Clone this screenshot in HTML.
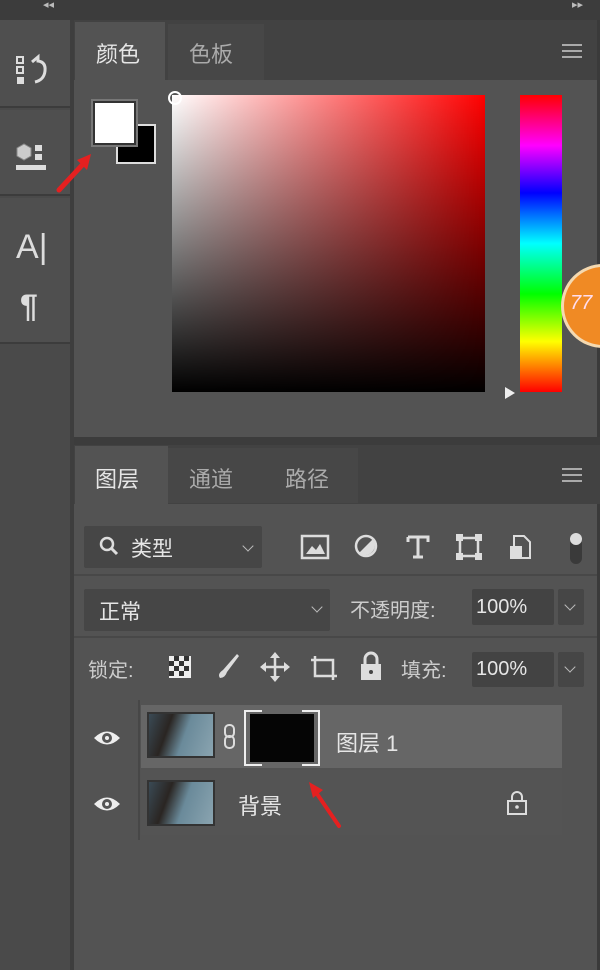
<!DOCTYPE html>
<html><head><meta charset="utf-8"><style>
*{margin:0;padding:0;box-sizing:border-box}
body{width:600px;height:970px;background:#535353;position:relative;overflow:hidden;font-family:"Liberation Sans","Noto Sans CJK SC",sans-serif;color:#ddd}
.a{position:absolute}
.box{position:absolute;background:#464646;border-radius:2px}
.t{position:absolute;font-size:21px;color:#e6e6e6;white-space:nowrap}
.chev{position:absolute;width:8px;height:8px;border-right:1.5px solid #bbb;border-bottom:1.5px solid #bbb;transform:rotate(45deg)}
.ham{position:absolute;width:20px;height:14px;border-top:2px solid #aaa;border-bottom:2px solid #aaa}
.ham:after{content:"";position:absolute;left:0;right:0;top:4px;height:2px;background:#aaa}
</style></head><body>
<div class="a" style="left:0;top:0;width:600px;height:20px;background:#3c3c3c"></div>
<div class="t" style="left:43px;top:-2px;font-size:11px;color:#bbb">◂◂</div>
<div class="t" style="left:572px;top:-2px;font-size:11px;color:#bbb">▸▸</div>
<div class="a" style="left:0;top:20px;width:72px;height:950px;background:#4a4a4a"></div>
<div class="a" style="left:0;top:20px;width:70px;height:88px;background:#4f4f4f;border-bottom:2px solid #3c3c3c"></div>
<div class="a" style="left:0;top:110px;width:70px;height:86px;background:#4f4f4f;border-bottom:2px solid #3c3c3c"></div>
<div class="a" style="left:0;top:198px;width:70px;height:146px;background:#4f4f4f;border-bottom:2px solid #3c3c3c"></div>
<div class="a" style="left:70px;top:20px;width:4px;height:950px;background:#3e3e3e"></div>
<svg class="a" style="left:14px;top:52px" width="36" height="40"><g fill="none" stroke="#ddd" stroke-width="2"><rect x="3" y="5" width="6" height="6"/><rect x="3" y="15" width="6" height="6"/></g><rect x="3" y="25" width="7" height="7" fill="#ddd"/><path d="M18 10 L24 5 L24 9 Q32 10 31 19 Q30 28 21 30" stroke="#ddd" stroke-width="3" fill="none"/></svg>
<svg class="a" style="left:14px;top:140px" width="36" height="40"><path d="M3 8 L10 4 L17 8 L17 16 L10 20 L3 16Z" fill="#ccc" stroke="#888"/><rect x="21" y="5" width="7" height="6" fill="#ddd"/><rect x="21" y="14" width="7" height="6" fill="#ddd"/><rect x="2" y="25" width="30" height="5" fill="#ddd"/></svg>
<div class="t" style="left:16px;top:228px;font-size:34px;color:#ddd">A<span style="font-weight:100">|</span></div>
<div class="t" style="left:20px;top:288px;font-size:32px;color:#ddd;font-weight:bold">¶</div>
<svg class="a" style="left:55px;top:150px" width="40" height="45"><path d="M4 40 L30 12" stroke="#e52020" stroke-width="5" stroke-linecap="round"/><path d="M36 4 L22 10 L32 20Z" fill="#e52020"/></svg>
<div class="a" style="left:74px;top:20px;width:526px;height:60px;background:#424242"></div>
<div class="a" style="left:75px;top:22px;width:90px;height:58px;background:#535353"></div>
<div class="a" style="left:168px;top:24px;width:96px;height:56px;background:#474747"></div>
<div class="t" style="left:96px;top:37px;font-size:22px">颜色</div>
<div class="t" style="left:189px;top:37px;font-size:22px;color:#aaa">色板</div>
<div class="ham" style="left:562px;top:44px"></div>
<div class="a" style="left:597px;top:20px;width:3px;height:950px;background:#3a3a3a"></div>
<div class="a" style="left:116px;top:124px;width:40px;height:40px;background:#000;border:2px solid #ddd"></div>
<div class="a" style="left:93px;top:101px;width:43px;height:44px;background:#fff;border:2px solid #333;outline:2px solid #777"></div>
<div class="a" style="left:172px;top:95px;width:313px;height:297px;background:linear-gradient(to bottom,rgba(0,0,0,0),#000),linear-gradient(to right,#fff,#f00)"></div>
<div class="a" style="left:168px;top:91px;width:14px;height:14px;border-radius:50%;border:2px solid #fff"></div>
<div class="a" style="left:520px;top:95px;width:42px;height:297px;background:linear-gradient(to bottom,#f00 0%,#f0f 17%,#00f 33%,#0ff 50%,#0f0 67%,#ff0 83%,#f00 100%)"></div>
<svg class="a" style="left:503px;top:385px" width="14" height="16"><path d="M2 2 L12 8 L2 14Z" fill="#eee"/></svg>
<div class="a" style="left:561px;top:264px;width:84px;height:84px;border-radius:50%;background:#f08a24;border:3px solid #f4d9b0"></div>
<div class="t" style="left:570px;top:292px;font-size:20px;font-style:italic;color:#fde">77</div>
<div class="a" style="left:74px;top:437px;width:526px;height:8px;background:#3c3c3c"></div>
<div class="a" style="left:74px;top:445px;width:526px;height:59px;background:#424242"></div>
<div class="a" style="left:75px;top:446px;width:93px;height:58px;background:#535353"></div>
<div class="a" style="left:168px;top:448px;width:190px;height:55px;background:#474747"></div>
<div class="t" style="left:95px;top:462px;font-size:22px">图层</div>
<div class="t" style="left:189px;top:462px;font-size:22px;color:#aaa">通道</div>
<div class="t" style="left:285px;top:462px;font-size:22px;color:#aaa">路径</div>
<div class="ham" style="left:562px;top:468px"></div>
<div class="box" style="left:84px;top:526px;width:178px;height:42px"></div>
<svg class="a" style="left:98px;top:535px" width="22" height="22"><circle cx="9" cy="9" r="6" fill="none" stroke="#ddd" stroke-width="2.5"/><path d="M13 13 L19 19" stroke="#ddd" stroke-width="3"/></svg>
<div class="t" style="left:131px;top:533px">类型</div>
<div class="chev" style="left:244px;top:542px"></div>
<svg class="a" style="left:300px;top:532px" width="290" height="34"><rect x="2" y="4" width="26" height="22" fill="none" stroke="#ddd" stroke-width="2.5"/><path d="M6 22 L12 14 L16 18 L20 12 L25 22Z" fill="#ddd"/>
<circle cx="66" cy="14" r="10" fill="none" stroke="#ddd" stroke-width="2.5"/><path d="M59 21 L73 7 A10 10 0 0 1 59 21Z" fill="#ddd"/>
<path d="M108 5 H128 V10 M108 5 V10 M118 5 V25 M113 25 H123" stroke="#ddd" stroke-width="3" fill="none"/>
<rect x="160" y="6" width="18" height="18" fill="none" stroke="#ddd" stroke-width="2.5"/><rect x="156" y="2" width="7" height="7" fill="#ddd"/><rect x="175" y="2" width="7" height="7" fill="#ddd"/><rect x="156" y="21" width="7" height="7" fill="#ddd"/><rect x="175" y="21" width="7" height="7" fill="#ddd"/>
<path d="M214 4 H224 L230 10 V26 H214Z" fill="none" stroke="#ddd" stroke-width="2"/><rect x="210" y="14" width="12" height="13" fill="#ddd"/>
<rect x="270" y="6" width="12" height="26" rx="6" fill="#3a3a3a"/><circle cx="276" cy="7" r="6" fill="#ddd"/></svg>
<div class="a" style="left:74px;top:574px;width:523px;height:2px;background:#484848"></div>
<div class="box" style="left:84px;top:589px;width:246px;height:42px"></div>
<div class="t" style="left:99px;top:596px">正常</div>
<div class="chev" style="left:313px;top:603px"></div>
<div class="t" style="left:350px;top:594px;color:#ccc;font-size:20px">不透明度:</div>
<div class="box" style="left:472px;top:589px;width:82px;height:36px;background:#434343"></div>
<div class="t" style="left:476px;top:596px;font-size:20px">100%</div>
<div class="box" style="left:558px;top:589px;width:26px;height:36px"></div>
<div class="chev" style="left:566px;top:601px"></div>
<div class="a" style="left:74px;top:636px;width:523px;height:2px;background:#484848"></div>
<div class="t" style="left:88px;top:654px;color:#ccc;font-size:20px">锁定:</div>
<svg class="a" style="left:165px;top:650px" width="225" height="34"><rect x="4" y="6" width="22" height="22" fill="#eee"/><g fill="#333"><rect x="9" y="6" width="5" height="5"/><rect x="19" y="6" width="5" height="5"/><rect x="4" y="11" width="5" height="5"/><rect x="14" y="11" width="5" height="5"/><rect x="9" y="16" width="5" height="5"/><rect x="19" y="16" width="5" height="5"/><rect x="4" y="21" width="5" height="5"/><rect x="14" y="21" width="5" height="5"/></g>
<path d="M55 28 Q52 24 58 20 L72 4 L74 6 L62 22 Q60 28 55 28Z" fill="#ddd"/>
<path d="M110 4 V30 M97 17 H123" stroke="#ddd" stroke-width="2.5"/><path d="M110 2 L105 8 H115Z M110 32 L105 26 H115Z M95 17 L101 12 V22Z M125 17 L119 12 V22Z" fill="#ddd"/>
<path d="M150 6 V26 H172 M146 10 H168 V30" stroke="#ddd" stroke-width="2.5" fill="none"/>
<rect x="196" y="14" width="20" height="16" fill="#ddd"/><path d="M200 14 V9 A6 6 0 0 1 212 9 V14" stroke="#ddd" stroke-width="3" fill="none"/><circle cx="206" cy="22" r="2" fill="#444"/></svg>
<div class="t" style="left:401px;top:654px;color:#ccc;font-size:20px">填充:</div>
<div class="box" style="left:472px;top:652px;width:82px;height:35px;background:#434343"></div>
<div class="t" style="left:476px;top:658px;font-size:20px">100%</div>
<div class="box" style="left:558px;top:652px;width:26px;height:35px"></div>
<div class="chev" style="left:566px;top:663px"></div>
<div class="a" style="left:138px;top:700px;width:2px;height:140px;background:#474747"></div>
<div class="a" style="left:141px;top:705px;width:421px;height:63px;background:#666"></div>
<div class="a" style="left:141px;top:770px;width:421px;height:65px;background:#545454"></div>
<svg class="a" style="left:92px;top:728px" width="30" height="20"><path d="M2 10 Q15 -3 28 10 Q15 23 2 10Z" fill="#eee"/><circle cx="15" cy="10" r="5" fill="#555"/><circle cx="15" cy="10" r="2" fill="#eee"/></svg>
<svg class="a" style="left:92px;top:794px" width="30" height="20"><path d="M2 10 Q15 -3 28 10 Q15 23 2 10Z" fill="#eee"/><circle cx="15" cy="10" r="5" fill="#555"/><circle cx="15" cy="10" r="2" fill="#eee"/></svg>
<div class="a" style="left:147px;top:712px;width:68px;height:46px;background:linear-gradient(110deg,#3a4a55 0%,#2a2522 30%,#6a8a9a 55%,#8aa4b0 100%);border:2px solid #333"></div>
<div class="a" style="left:147px;top:780px;width:68px;height:46px;background:linear-gradient(110deg,#3a4a55 0%,#2a2522 30%,#6a8a9a 55%,#8aa4b0 100%);border:2px solid #333"></div>
<svg class="a" style="left:222px;top:722px" width="16" height="30"><rect x="3" y="3" width="9" height="12" rx="4" fill="none" stroke="#ddd" stroke-width="2"/><rect x="3" y="14" width="9" height="12" rx="4" fill="none" stroke="#ddd" stroke-width="2"/></svg>
<div class="a" style="left:244px;top:710px;width:76px;height:56px;border:2px solid #eee"></div>
<div class="a" style="left:262px;top:708px;width:40px;height:60px;background:#666"></div>
<div class="a" style="left:250px;top:714px;width:64px;height:48px;background:#050505"></div>
<div class="t" style="left:336px;top:726px;font-size:22px">图层 1</div>
<div class="t" style="left:238px;top:789px;font-size:22px">背景</div>
<svg class="a" style="left:505px;top:790px" width="24" height="26"><rect x="3" y="11" width="18" height="13" fill="none" stroke="#ddd" stroke-width="2"/><path d="M7 11 V7 A5 5 0 0 1 17 7 V11" stroke="#ddd" stroke-width="2" fill="none"/><circle cx="12" cy="17" r="1.8" fill="#ddd"/></svg>
<svg class="a" style="left:305px;top:780px" width="40" height="50"><path d="M8 8 L34 46" stroke="#e52020" stroke-width="4" stroke-linecap="round"/><path d="M4 2 L18 10 L8 18Z" fill="#e52020"/></svg>
</body></html>
